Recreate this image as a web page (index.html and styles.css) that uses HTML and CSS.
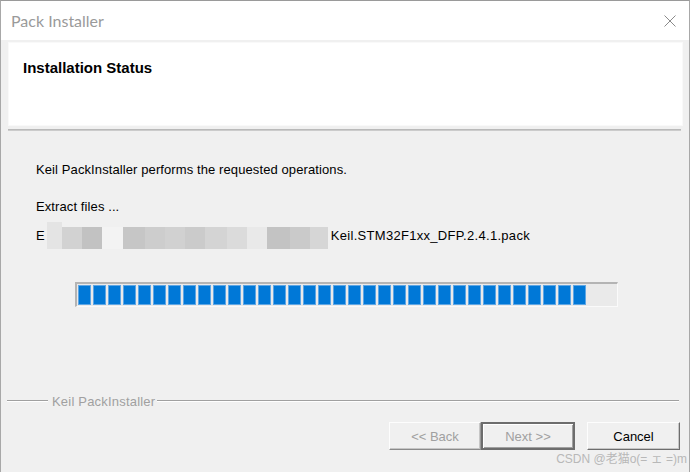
FILE: index.html
```html
<!DOCTYPE html>
<html lang="en">
<head>
  <meta charset="UTF-8">
  <title>Pack Installer</title>
  <link rel="stylesheet" href="styles.css">
</head>
<body>
  <div class="window">
    <div class="titlebar">
      <span class="title">Pack Installer</span>
      <svg class="close" width="12" height="12" viewBox="0 0 12 12">
        <path d="M0.5 0.5 L11.5 11.5 M11.5 0.5 L0.5 11.5" stroke="#8a8a8a" stroke-width="1" fill="none"/>
      </svg>
    </div>

    <div class="content">
      <div class="header">
        <h1>Installation Status</h1>
      </div>
      <div class="rule"></div>

      <div class="status">
        <p class="line first">Keil PackInstaller performs the requested operations.</p>
        <p class="line second">Extract files ...</p>
        <div class="path">
          <span>E</span>
          <span class="mosaic">
            <i class="m1"></i><i class="m2"></i><i class="m3"></i><i class="m4"></i><i class="m5"></i><i class="m6"></i><i class="m7"></i><i class="m8"></i><i class="m9"></i><i class="m10"></i><i class="m11"></i><i class="m12"></i><i class="m13"></i><i class="m14"></i>
          </span>
          <span class="file">Keil.STM32F1xx_DFP.2.4.1.pack</span>
        </div>

        <div class="progress" id="progress"></div>
      </div>

      <div class="group">
        <span class="group-line short"></span>
        <span class="group-label">Keil PackInstaller</span>
        <span class="group-line"></span>
      </div>

      <div class="buttons">
        <button class="btn disabled">&lt;&lt; Back</button>
        <button class="btn default disabled">Next &gt;&gt;</button>
        <button class="btn cancel">Cancel</button>
      </div>

      <div class="watermark">CSDN @老猫o(= ェ =)m</div>
    </div>
  </div>

  <script>
    // 34 filled blocks in the progress bar
    const bar = document.getElementById("progress");
    for (let i = 0; i < 34; i++) {
      const block = document.createElement("span");
      block.className = "block";
      bar.appendChild(block);
    }
  </script>
</body>
</html>
```

FILE: styles.css
```css
body {
  margin: 0;
  background: #fff;
  font-family: "Liberation Sans", Arial, sans-serif;
  font-size: 13px;
  color: #000;
}
.window {
  width: 688px;
  height: 471px;
  border-top: 1px solid #9a9a9a;
  border-left: 1px solid #a8a8a8;
  border-right: 1px solid #a8a8a8;
  display: flex;
  flex-direction: column;
}
.titlebar {
  height: 39px;
  background: #fff;
  display: flex;
  align-items: center;
  justify-content: space-between;
  padding: 0 13px 0 10px;
}
.title {
  font-family: Lato, "Noto Sans", sans-serif;
  font-size: 16px;
  color: #9a9a9a;
  margin-top: -1px;
}
.close {
  display: block;
  margin-top: 1px;
}
.content {
  flex: 1;
  background: #f0f0f0;
  position: relative;
  padding-top: 2px;
}
.header {
  background: #fff;
  margin: 0 6px 0 7px;
  height: 84px;
  padding: 15px 0 0 14px;
  box-sizing: border-box;
  border: 1px solid #f9f9f9;
}
.header h1 {
  margin: 0;
  font-size: 15px;
  font-weight: bold;
  line-height: 20px;
}
.rule {
  margin: 3px 8px 0 7px;
  height: 1px;
  border-top: 1px solid #b9b9b9;
  background: #cbcbcb;
}
.status {
  padding-left: 35px;
  letter-spacing: 0.1px;
}
.line {
  margin: 0;
  line-height: 16px;
}
.line.first {
  margin-top: 31px;
}
.line.second {
  margin-top: 21px;
}
.path {
  display: flex;
  align-items: center;
  height: 27px;
  margin-top: 7px;
}
.mosaic {
  display: flex;
  align-items: flex-end;
  height: 27px;
  margin-left: 2px;
}
.mosaic i {
  display: block;
  height: 22px;
}
.m1 { width: 15px; height: 27px !important; background: #e4e4e4; }
.m2 { width: 20px; background: #d2d2d2; }
.m3 { width: 20px; background: #c2c2c2; }
.m4 { width: 21px; background: #f3f3f3; }
.m5 { width: 22px; background: #c6c6c6; }
.m6 { width: 20px; background: #cdcdcd; }
.m7 { width: 20px; background: #d1d1d1; }
.m8 { width: 20px; background: #cbcbcb; }
.m9 { width: 22px; background: #d4d4d4; }
.m10 { width: 20px; background: #dbdbdb; }
.m11 { width: 20px; background: #e9e9e9; }
.m12 { width: 23px; background: #c3c3c3; }
.m13 { width: 20px; background: #cacaca; }
.m14 { width: 18px; background: #d6d6d6; }
.file {
  margin-left: 3px;
  letter-spacing: 0.3px;
}
.progress {
  margin: 33px 0 0 39px;
  width: 543px;
  height: 25px;
  box-sizing: border-box;
  border-top: 2px solid #b4b4b4;
  border-left: 2px solid #b4b4b4;
  border-right: 1px solid #fafafa;
  border-bottom: 1px solid #fafafa;
  background: #eaeaea;
  padding: 0 0 0 1px;
  display: flex;
  align-items: center;
  gap: 2px;
}
.block {
  width: 11px;
  height: 18px;
  background: #0078d7;
  border: 1px solid #5ea6e4;
}
.group {
  display: flex;
  align-items: center;
  height: 16px;
  margin: 86px 10px 0 6px;
}
.group-line {
  flex: 1;
  height: 1px;
  background: #a0a0a0;
  border-bottom: 1px solid #fff;
}
.group-line.short {
  flex: none;
  width: 41px;
}
.group-label {
  color: #a0a0a0;
  padding: 0 2px 0 4px;
  letter-spacing: 0.2px;
}
.buttons {
  display: flex;
  justify-content: flex-end;
  margin-top: 13px;
  padding-right: 9px;
}
.btn {
  font-family: "Liberation Sans", Arial, sans-serif;
  font-size: 13px;
  height: 28px;
  width: 92px;
  background: #f0f0f0;
  border: 1px solid;
  border-color: #fdfdfd #9a9a9a #8a8a8a #fdfdfd;
  box-shadow: inset -1px -1px 0 #c6c6c6;
  color: #000;
  padding: 0;
}
.btn.disabled {
  color: #a0a0a0;
}
.btn.default {
  width: 94px;
  border: 2px solid #6d6d6d;
  box-shadow: inset 1px 1px 0 #fff, inset -1px -1px 0 #a0a0a0;
  margin-right: 12px;
}
.btn.cancel {
  width: 93px;
  border-color: #fdfdfd #6d6d6d #6d6d6d #fdfdfd;
}
.watermark {
  position: absolute;
  right: 2px;
  bottom: 6px;
  font-family: "Liberation Sans", "Noto Sans CJK SC", sans-serif;
  font-size: 12px;
  color: #b8b8b8;
}
```
